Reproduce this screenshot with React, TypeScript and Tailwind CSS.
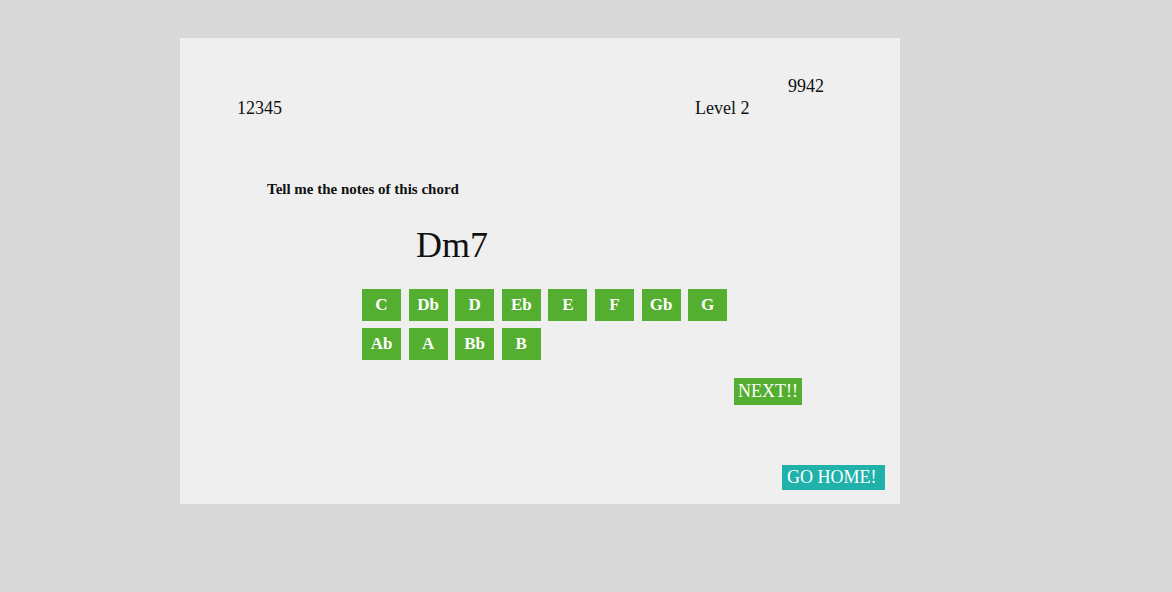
const notes = ["C", "Db", "D", "Eb", "E", "F", "Gb", "G", "Ab", "A", "Bb", "B"];

export default function App() {
  return (
    <div className="min-h-[592px] w-full bg-[#d9d9d9] pt-[38px] text-[#111]" style={{ fontFamily: '"Liberation Serif", "Times New Roman", serif' }}>
      <div className="ml-[180px] flex h-[466px] w-[720px] flex-col bg-[#efefef]">
        {/* score / level / points */}
        <div className="flex items-start pt-[37px] text-[18px] leading-[22px]">
          <div className="mt-[22px] w-[515px] pl-[57px]">12345</div>
          <div className="mt-[22px] w-[93px]">Level 2</div>
          <div>9942</div>
        </div>

        <p className="mt-[61px] pl-[87px] text-[15px] font-bold leading-[18px]">Tell me the notes of this chord</p>

        <div className="mt-[26px] pl-[236px] text-[36px] leading-[42px]">Dm7</div>

        <div className="mt-[23px] ml-[182px] grid grid-cols-[repeat(8,39px)] gap-x-[7.6px] gap-y-[7px]">
          {notes.map(n => (
            <button key={n} className="h-[32px] bg-[#54ae2f] text-center text-[17px] font-bold leading-[32px] text-white">
              {n}
            </button>
          ))}
        </div>

        <div className="mt-[18px] pl-[554px]">
          <button className="h-[27px] bg-[#54ae2f] px-[4px] text-[18px] leading-[27px] text-white">NEXT!!</button>
        </div>

        <div className="mt-[60px] pl-[602px]">
          <button className="h-[25px] w-[103px] bg-[#20b2aa] pl-[5px] text-left text-[18px] leading-[25px] text-white">GO HOME!</button>
        </div>
      </div>
    </div>
  );
}
